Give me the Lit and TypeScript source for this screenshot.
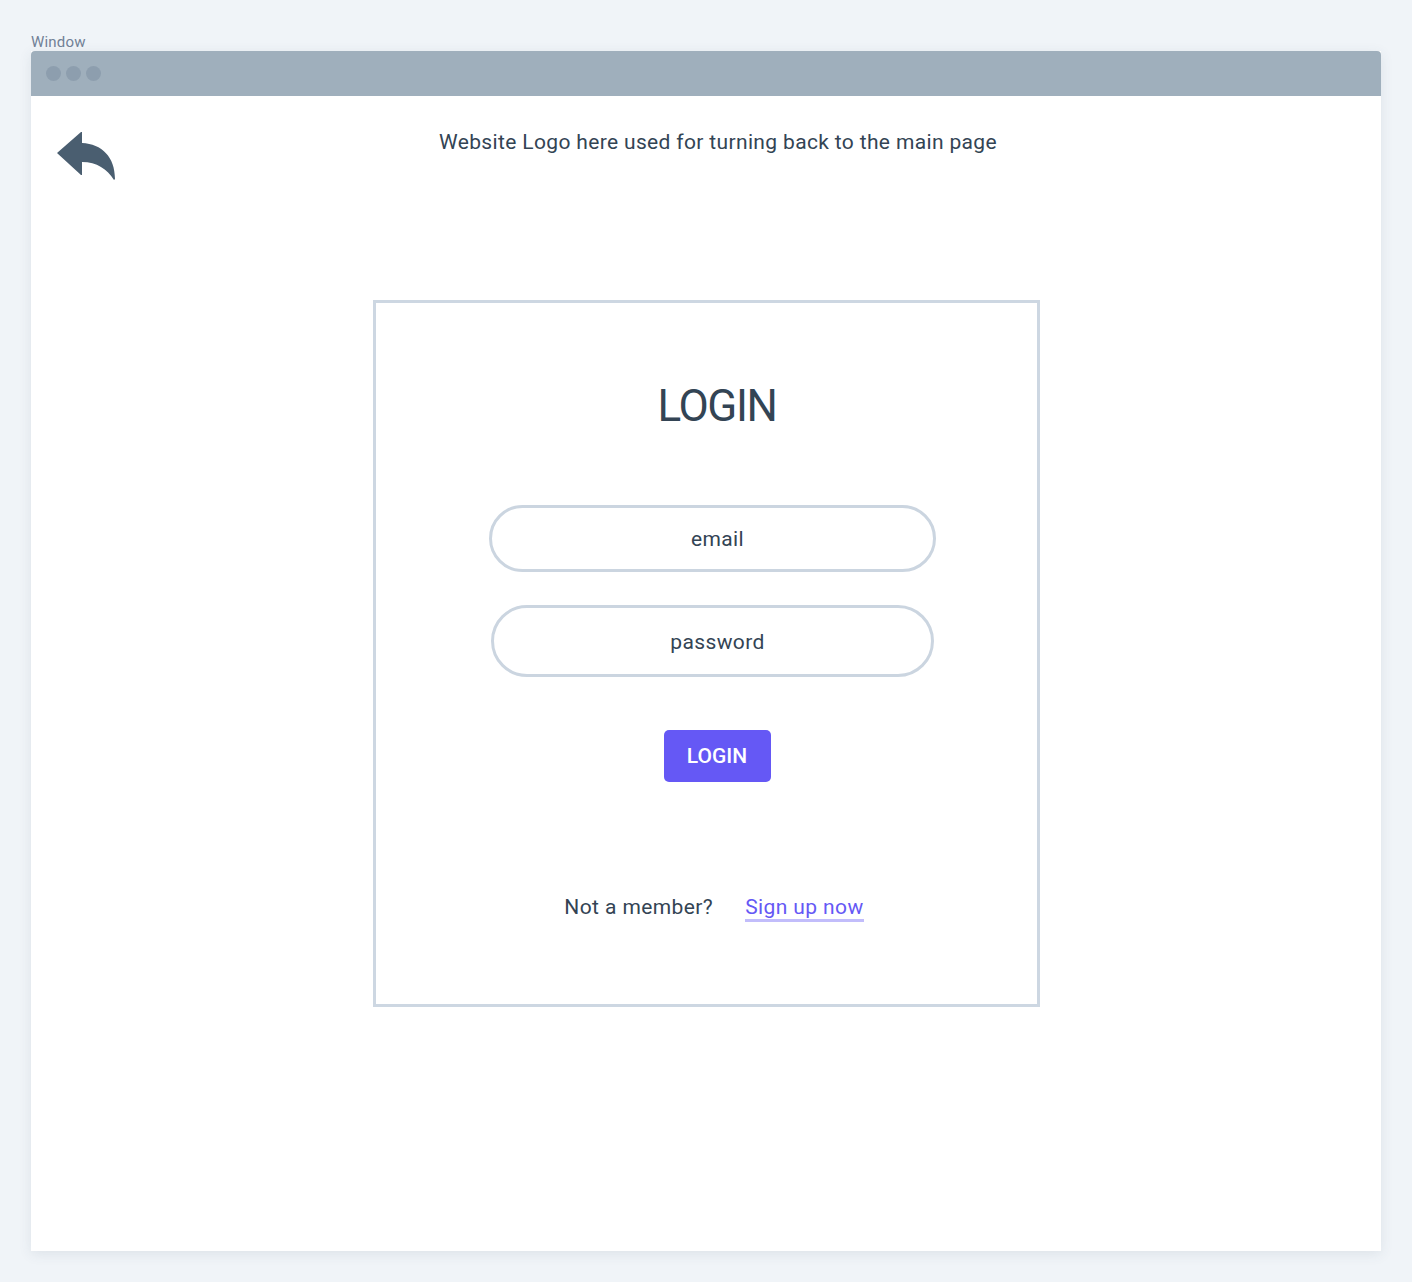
import { LitElement, html, css } from 'lit';
import { customElement } from 'lit/decorators.js';

@customElement('app-root')
export class AppRoot extends LitElement {
  static styles = css`
    :host {
      display: block;
      height: 1282px;
      box-sizing: border-box;
      padding: 32px 31px 0;
      background: #f0f4f8;
      font-family: Roboto, "Liberation Sans", sans-serif;
      color: #334454;
      overflow: hidden;
    }
    .label {
      height: 19px;
      font-size: 15px;
      line-height: 21px;
      letter-spacing: 0.2px;
      color: #718096;
    }
    .window {
      height: 1200px;
      display: flex;
      flex-direction: column;
      background: #fff;
      box-shadow: 0 3px 12px rgba(60, 80, 100, 0.1);
    }
    .titlebar {
      flex: none;
      height: 45px;
      display: flex;
      align-items: center;
      gap: 5px;
      padding-left: 15px;
      box-sizing: border-box;
      background: #9fafbc;
      border-radius: 4px 4px 0 0;
    }
    .dot {
      width: 15px;
      height: 15px;
      border-radius: 50%;
      background: #8d9eae;
    }
    .top {
      flex: none;
      height: 204px;
      display: grid;
      grid-template-columns: 1fr;
      justify-items: center;
      position: relative;
      padding: 33px 0 0 24px;
      box-sizing: border-box;
    }
    .back {
      position: absolute;
      left: 26px;
      top: 35px;
      width: 60px;
      height: 50px;
    }
    .tagline {
      font-size: 21px;
      line-height: 26px;
      letter-spacing: 0.35px;
    }
    .card {
      align-self: center;
      width: 667px;
      height: 707px;
      box-sizing: border-box;
      border: 3px solid #cdd7e2;
      display: flex;
      flex-direction: column;
      align-items: center;
    }
    .heading {
      margin: 78px 0 0 22px;
      font-size: 44px;
      line-height: 50px;
      font-weight: 400;
      letter-spacing: -1.4px;
    }
    .field {
      display: flex;
      align-items: center;
      justify-content: center;
      box-sizing: border-box;
      border: 3px solid #cbd5e0;
      border-radius: 999px;
      font-size: 21px;
      letter-spacing: 0.4px;
      padding-left: 10px;
      padding-top: 1px;
    }
    .email {
      width: 447px;
      height: 67px;
      margin: 74px 0 0 13px;
    }
    .password {
      width: 443px;
      height: 72px;
      margin: 33px 0 0 12px;
      padding-left: 11px;
    }
    .submit {
      width: 107px;
      height: 52px;
      margin: 53px 0 0 22px;
      border: none;
      border-radius: 5px;
      background: #6558f5;
      color: #fff;
      font: 500 21px Roboto, "Liberation Sans", sans-serif;
      padding: 0;
    }
    .signup {
      display: flex;
      gap: 32px;
      margin: 110px 0 0 16px;
      font-size: 21px;
      line-height: 30px;
      letter-spacing: 0.4px;
    }
    .signup a {
      color: #6558f5;
      text-decoration: none;
      border-bottom: 3px solid #c2bdfb;
      height: 27px;
    }
  `;

  render() {
    return html`
      <div class="label">Window</div>
      <div class="window">
        <div class="titlebar">
          <span class="dot"></span><span class="dot"></span><span class="dot"></span>
        </div>
        <div class="top">
          <svg class="back" viewBox="0 0 60 50">
            <path
              fill="#4a5e70"
              d="M0 22 L24 1 L25 1 L25 12 C45 13 58 26 58 48 L57 49 C50 38 40 31 25 31 L25 44 L24 44 Z"
            />
          </svg>
          <div class="tagline">Website Logo here used for turning back to the main page</div>
        </div>
        <div class="card">
          <h1 class="heading">LOGIN</h1>
          <div class="field email">email</div>
          <div class="field password">password</div>
          <button class="submit">LOGIN</button>
          <div class="signup">
            <span>Not a member?</span>
            <a href="#">Sign up now</a>
          </div>
        </div>
      </div>
    `;
  }
}
